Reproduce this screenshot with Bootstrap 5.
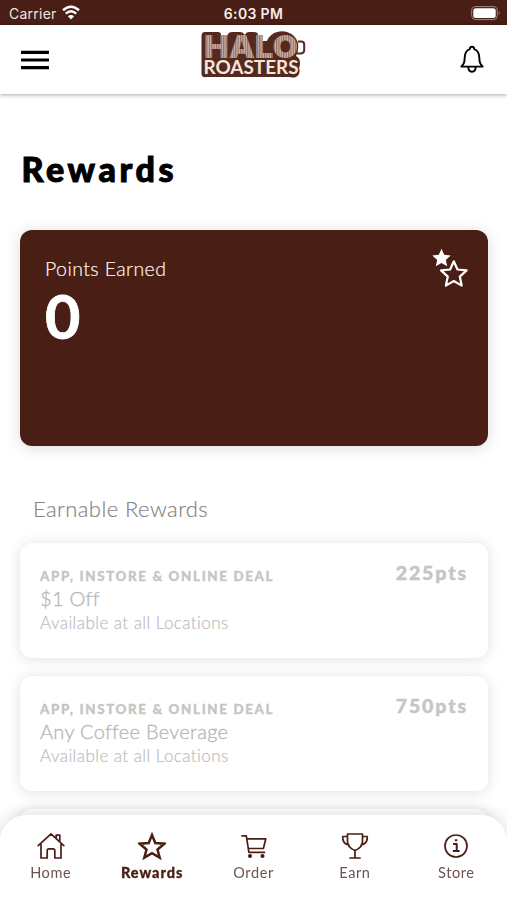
<!DOCTYPE html>
<html lang="en">
<head>
<meta charset="utf-8">
<meta name="viewport" content="width=device-width, initial-scale=1">
<title>Halo Roasters Rewards</title>
<link href="https://cdn.jsdelivr.net/npm/bootstrap@5.3.0/dist/css/bootstrap.min.css" rel="stylesheet">
<style>
:root{--brown:#491e14}
body{font-family:Lato,"Noto Sans",sans-serif;height:900px;overflow:hidden;background:#fff;color:#000}
svg{display:block;flex:none}
.statusbar{height:25px;background:var(--brown);color:#eee5e2;font:400 14px/27px Inter,sans-serif;letter-spacing:.25px;padding:0 6px 0 9px}
.clock{font-weight:600;color:#f5eeec;letter-spacing:.35px}
.topbar{height:69px;box-shadow:0 1px 4px rgba(0,0,0,.35);padding:0 21px}
.page-title{font-size:34px;line-height:40px;font-weight:900;letter-spacing:3.6px;-webkit-text-stroke:1px #000;margin:55px 0 40.5px 21.5px}
.points-card{height:216px;margin:0 19px 0 20px;border:0;border-radius:12px;background:var(--brown);color:#fff;padding:27px 20px 0 25px;box-shadow:0 2px 16px rgba(0,0,0,.14)}
.points-label{font-size:19.5px;line-height:24px;font-weight:300;color:#fff4ee;letter-spacing:.42px;-webkit-text-stroke:.2px #fff4ee}
.points-value{font-size:61px;line-height:60px;font-weight:700;margin-top:5px;-webkit-text-stroke:.8px #fff}
.stars{margin-top:-8.5px}
.section-title{font-size:22px;line-height:28px;font-weight:300;color:#858585;letter-spacing:.43px;-webkit-text-stroke:.2px #858585;margin:49.5px 0 20px 33px}
.reward{height:114.5px;margin:0 19px 18.7px 20px;border:0;border-radius:12px;box-shadow:0 1px 14px rgba(0,0,0,.13);padding:23px 20px 0 20px;color:#c5c5c5}
.deal{font-size:13.3px;line-height:20px;font-weight:900;letter-spacing:1.67px;-webkit-text-stroke:.3px #c5c5c5}
.reward-name{font-size:20px;line-height:25px;font-weight:300;color:#b8b8b8;letter-spacing:.3px;-webkit-text-stroke:.35px #b8b8b8}
.where{font-size:17px;line-height:24px;font-weight:300;color:#bcbcbc;letter-spacing:.43px;-webkit-text-stroke:.2px #bcbcbc}
.pts{font-size:19.5px;line-height:24px;font-weight:900;letter-spacing:1.9px;margin:-5px 0 0 0;-webkit-text-stroke:.4px #c5c5c5}
.tabs{height:85px;background:#fff;border-radius:26px 26px 0 0;box-shadow:0 -1px 16px rgba(0,0,0,.14);padding-top:17px}
.tabs a{flex:1 1 0;color:#6b544d;text-decoration:none;font-size:14.5px;line-height:18px;letter-spacing:.6px}
.tabs a svg{margin-bottom:4px;stroke:var(--brown);fill:none;stroke-width:1.7;stroke-linejoin:round;stroke-linecap:round}
.tabs a.current{color:var(--brown);font-weight:900;letter-spacing:.95px;-webkit-text-stroke:.3px var(--brown)}
</style>
<script src="https://cdn.jsdelivr.net/npm/bootstrap@5.3.0/dist/js/bootstrap.bundle.min.js"></script>
</head>
<body>
<div class="statusbar d-flex justify-content-between position-relative">
  <div class="d-flex gap-1"><span>Carrier</span>
    <svg width="20" height="25" viewBox="-1 0 20 25" fill="none" stroke="#fff" stroke-width="2.5"><path d="M1 10.3Q9 3.2 17 10.3M3.8 13.6Q9 8.9 14.2 13.6"/><path d="M9 19.5 5.9 16.3Q9 13.8 12.1 16.3Z" fill="#fff" stroke="none"/></svg>
  </div>
  <span class="clock position-absolute start-50 translate-middle-x">6:03 PM</span>
  <svg width="30" height="25" viewBox="0 0 30 25"><rect x="0.7" y="6.6" width="25.6" height="13" rx="4" fill="none" stroke="#a18983"/><rect x="2.3" y="8.2" width="22.4" height="9.8" rx="2.5" fill="#fff"/><path d="M27.8 11.2q2 1.9 0 3.8z" fill="#a18983"/></svg>
</div>
<header class="topbar d-flex justify-content-between align-items-center position-relative">
  <svg width="28" height="20" viewBox="0 0 28 20" stroke="#000" stroke-width="3.2"><path d="M0 2.4h28M0 10h28M0 17.7h28"/></svg>
  <svg class="position-absolute start-50 top-0 translate-middle-x" width="108" height="58" viewBox="200 25 108 58" role="img" aria-label="Halo Roasters">
    <defs><pattern id="stripes" width="2.4" height="4" patternUnits="userSpaceOnUse"><path d="M0 0h2.4v4H0z" fill="#c9b0a6"/><path d="M0 0h1.1v4H0z" fill="#936d61"/></pattern></defs>
    <path d="M298 41.5h3.200q3 0 3 3v5.500q0 3-3 3.500H297" fill="none" stroke="#55291f" stroke-width="2"/>
    <path d="M205 32h13q3 0 3 3v3h5l2-4q1-2 4-2h8q3 0 4 2l1 1q1-3 4-3h5q4 0 4 3v6h9q1-4 7-8 7-3 13-1 9 3 11 11 1 8-2 13 4 2 4 7 0 3-1 5 2 6-3 9-3 1-6 0H207q-5 1-5.500-3V36q0-4 3.500-4Z" fill="#55291f"/>
    <text x="204" y="58" font-family="Inter, sans-serif" font-size="32" font-weight="900" fill="url(#stripes)" textLength="94" lengthAdjust="spacingAndGlyphs">HALO</text>
    <text x="203.500" y="74.300" font-family="Lato, sans-serif" font-size="18" font-weight="700" fill="#f6e6da" stroke="#55291f" stroke-width="2" paint-order="stroke" textLength="95" lengthAdjust="spacingAndGlyphs">ROASTERS</text>
  </svg>
  <svg width="28" height="30" viewBox="458 43.700 28 30" fill="none" stroke="#000" stroke-width="1.9" stroke-linejoin="round"><path d="M461.300 65.300c3-3 3.200-4.500 3.400-9 .2-4.700 2-7.500 5-8.500.2-1.600 1-2.400 2.300-2.400s2.100.8 2.300 2.400c3 1 4.800 3.800 5 8.500.2 4.500.4 6 3.400 9Z"/><path d="M468.300 65.500c0 3.300 1.600 5 3.700 5s3.700-1.700 3.700-5"/></svg>
</header>
<main>
  <h1 class="page-title">Rewards</h1>
  <section class="points-card card flex-row justify-content-between">
    <div><div class="points-label">Points Earned</div><div class="points-value">0</div></div>
    <svg class="stars" width="36" height="40" viewBox="432 248 36 40"><path d="m441.500 248.800 2.700 6 6.500.7-4.900 4.400 1.400 6.400-5.700-3.300-5.700 3.300 1.400-6.400-4.900-4.400 6.500-.7Z" fill="#fff"/><path d="m453.800 261.300 3.700 8.200 9.100.9-6.800 6.200 1.900 9-7.900-4.600-7.900 4.600 1.900-9-6.800-6.200 9.100-.9Z" fill="#491e14" stroke="#fff" stroke-width="2.200" stroke-linejoin="round"/></svg>
  </section>
  <h2 class="section-title">Earnable Rewards</h2>
  <article class="reward card flex-row justify-content-between align-items-start">
    <div><div class="deal">APP, INSTORE &amp; ONLINE DEAL</div><div class="reward-name">$1 Off</div><div class="where">Available at all Locations</div></div>
    <div class="pts">225pts</div>
  </article>
  <article class="reward card flex-row justify-content-between align-items-start">
    <div><div class="deal">APP, INSTORE &amp; ONLINE DEAL</div><div class="reward-name">Any Coffee Beverage</div><div class="where">Available at all Locations</div></div>
    <div class="pts">750pts</div>
  </article>
  <article class="reward card"></article>
</main>
<nav class="tabs fixed-bottom d-flex">
  <a href="#" class="d-flex flex-column align-items-center"><svg width="28" height="28" viewBox="0 0 28 28"><path d="M1.200 13.600 14 1.800l12.800 11.800M4 12v14h6.200v-7.400q0-1.800 1.800-1.800h4q1.800 0 1.800 1.800V26H24V12M19.200 6V3.100h3.600V10"/></svg>Home</a>
  <a href="#" class="current d-flex flex-column align-items-center"><svg width="28" height="28" viewBox="0 0 28 28"><path stroke-width="2.500" stroke-linejoin="miter" d="m14 3 3.300 8 9 .7-6.800 5.800 2.200 8.200L14 21.200l-7.700 4.500 2.200-8.200-6.800-5.800 9-.7Z"/></svg>Rewards</a>
  <a href="#" class="d-flex flex-column align-items-center"><svg width="28" height="28" viewBox="0 0 28 28"><path d="M2 3.800h4.300l2.600 16.500h15.600M6.800 6.800h19L23.400 16.500H8.400"/><circle cx="10" cy="24" r="1.200" fill="#491e14"/><circle cx="22.500" cy="24" r="1.200" fill="#491e14"/></svg>Order</a>
  <a href="#" class="d-flex flex-column align-items-center"><svg width="28" height="28" viewBox="0 0 28 28"><path d="M6.500 2h15v7.500q0 6-7.500 9-7.500-3-7.500-9ZM6.500 4.500H1.700q-.6 7 6.300 8.500M21.500 4.500h4.800q.6 7-6.300 8.500M14 18.500V26M9 26h10"/></svg>Earn</a>
  <a href="#" class="d-flex flex-column align-items-center"><svg width="28" height="28" viewBox="0 0 28 28"><circle cx="14" cy="14" r="11"/><path stroke-width="2" stroke-linecap="butt" d="M11 12h3.700v7M10.800 19h6.800M12.900 8.300h2.400"/></svg>Store</a>
</nav>
</body>
</html>
